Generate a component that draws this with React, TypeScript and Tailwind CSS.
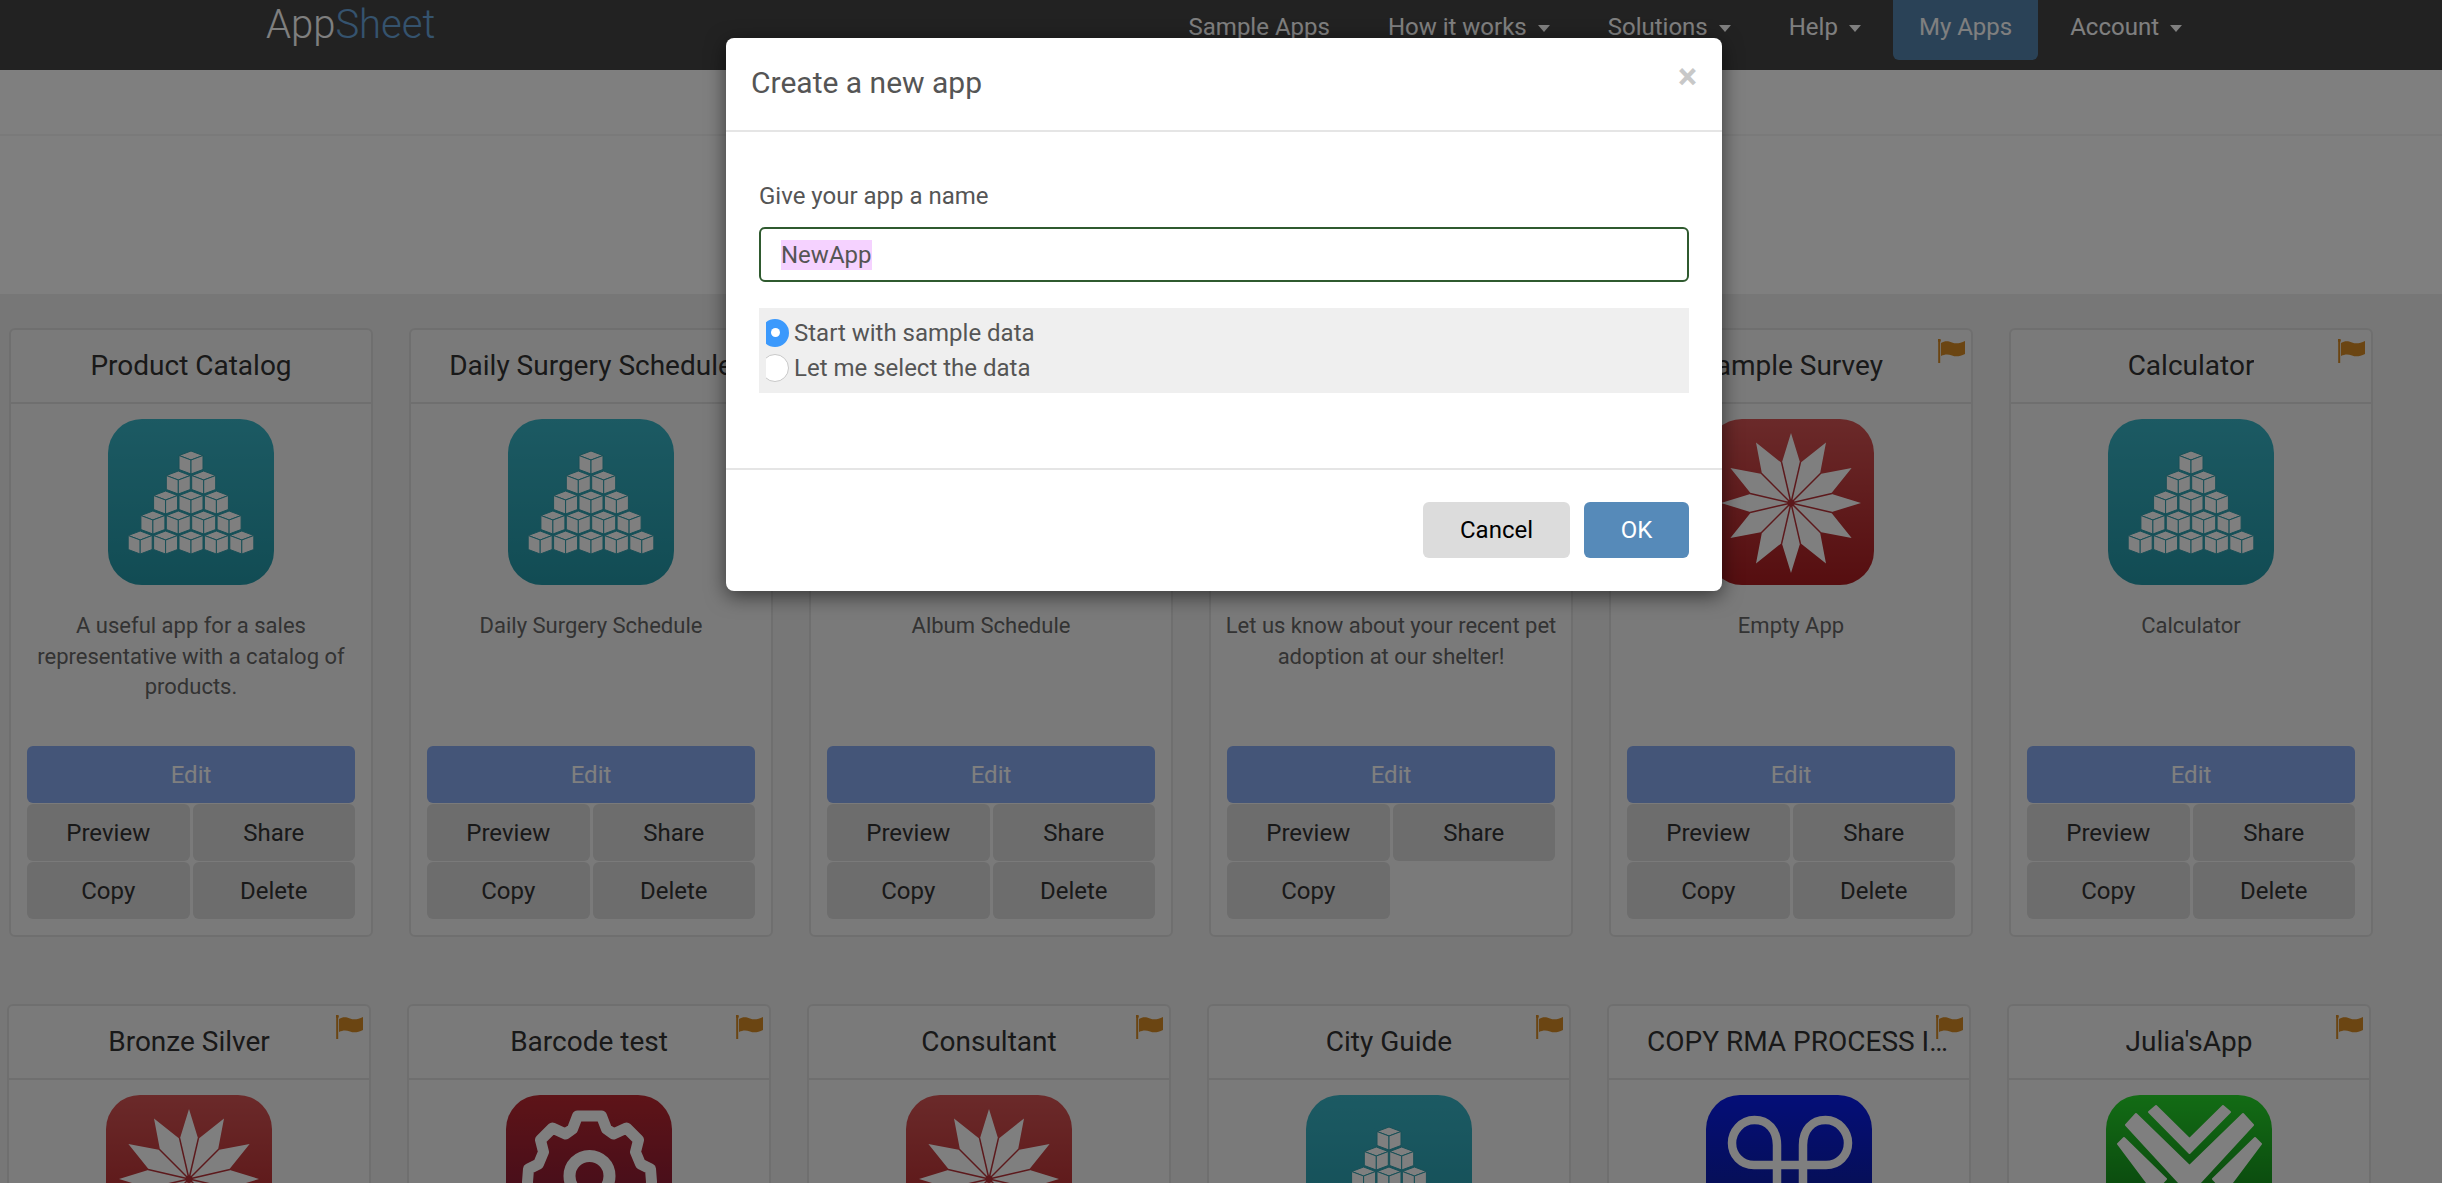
const font = { fontFamily: "Roboto, sans-serif" };

const CubeIcon = () => {
  const rows = [1, 2, 3, 4, 5];
  return (
    <>
      {rows.map((count, r) =>
        Array.from({ length: count }).map((_, i) => {
          const x = 83 + (i - (count - 1) / 2) * 25.4;
          const y = 32 + r * 20;
          return (
            <g key={r + "-" + i} fill="#ffffff" stroke="#2f9fae" strokeWidth="1" strokeLinejoin="round">
              <path d={`M${x} ${y}L${x + 12 } ${y + 4.5}L${x} ${y + 9}L${x - 12} ${y + 4.5}Z`} />
              <path d={`M${x - 12} ${y + 4.5}L${x} ${y + 9}V${y + 23}L${x - 12} ${y + 18.5}Z`} />
              <path d={`M${x + 12} ${y + 4.5}L${x} ${y + 9}V${y + 23}L${x + 12} ${y + 18.5}Z`} />
            </g>
          );
        })
      )}
    </>
  );
};

const polar = (deg: number, r: number) => {
  const a = (deg * Math.PI) / 180;
  return [83 + r * Math.sin(a), 84 - r * Math.cos(a)];
};

const StarIcon = () => {
  const shoulders = [13, 45, 77, 103, 135, 167, 193, 225, 257, 283, 315, 347];
  const outline: string[] = [];
  shoulders.forEach((s, i) => {
    outline.push(polar(i * 30, 70).join(" "));
    outline.push(polar(s, 41).join(" "));
  });
  return (
    <>
      <polygon points={outline.join(" ")} fill="#ffffff" />
      {shoulders.map((s) => {
        const [x, y] = polar(s, 42);
        return <line key={s} x1="83" y1="84" x2={x} y2={y} stroke="#b93238" strokeWidth="1.5" />;
      })}
      <circle cx="83" cy="84" r="3.5" fill="#b93238" />
    </>
  );
};

const GearIcon = () => {
  // left half of the outline, mirrored to the right and then to the bottom
  const half = [[12, 21], [17, 34], [24, 39], [37, 33], [49, 45], [46, 57], [51, 69], [61, 74], [62, 87]];
  const top = [...half.map(([d, y]) => [83.5 - d, y]).reverse(), ...half.map(([d, y]) => [83.5 + d, y])];
  const bottom = [...top].reverse().map(([x, y]) => [x, 174 - y]);
  const pts = [...top, ...bottom].map((p) => p.join(" ")).join(" ");
  return (
    <>
      <polygon points={pts} fill="none" stroke="#ffffff" strokeWidth="11" strokeLinejoin="round" />
      <circle cx="83.5" cy="81" r="20" fill="none" stroke="#ffffff" strokeWidth="12" />
    </>
  );
};

const LoopIcon = () => (
  <path
    d="M71 130V50C71 35 62 25 48.5 25C35 25 26 37 26 48C26 60 35 70 48 70H120C133 70 142 60 142 48C142 37 133 25 119.5 25C106 25 97 35 97 50V130"
    fill="none"
    stroke="#ffffff"
    strokeWidth="8.5"
  />
);

const ChevronIcon = () => (
  <g fill="#ffffff" stroke="#ffffff" strokeWidth="2" strokeLinejoin="round">
    <polygon points="50,11 83.5,44 117,11 124,17 83.5,58 43,17" />
    <polygon points="30,19 83.5,71 137,19 147,30 83.5,99 20,30" />
    <polygon points="18,43 60,84 48,97 12,49" />
    <polygon points="149,43 107,84 119,97 155,49" />
  </g>
);

const icons = {
  cube: { top: "#38b4c6", bottom: "#2498a8", art: <CubeIcon /> },
  star: { top: "#d65454", bottom: "#ac1c20", art: <StarIcon /> },
  gear: { top: "#bc2830", bottom: "#701438", art: <GearIcon /> },
  loop: { top: "#081cf0", bottom: "#10207c", art: <LoopIcon /> },
  chevron: { top: "#26d82a", bottom: "#0a6414", art: <ChevronIcon /> },
};

const AppIcon = ({ kind }: { kind: keyof typeof icons }) => {
  const icon = icons[kind];
  return (
    <svg width="166" height="166" viewBox="0 0 166 166" className="block">
      <defs>
        <linearGradient id={"g-" + kind} x1="0" y1="0" x2="0" y2="1">
          <stop offset="0" stopColor={icon.top} />
          <stop offset="1" stopColor={icon.bottom} />
        </linearGradient>
      </defs>
      <rect width="166" height="166" rx="34" fill={`url(#g-${kind})`} />
      {icon.art}
    </svg>
  );
};

const Flag = () => (
  <svg width="27" height="24" viewBox="0 0 27 24" className="absolute right-[6px] top-[9px]">
    <rect x="0.2" y="0" width="2" height="24" fill="#d68a24" />
    <circle cx="1.2" cy="1.4" r="1.6" fill="#d68a24" />
    <path d="M3 4C7 1.5 10 2 14 3.5C18 5 22 4.5 27 2V15C22 17.5 18 18 14 16.5C10 15 7 15 3 17Z" fill="#d68a24" />
  </svg>
);

const ActionButton = ({ label }: { label: string }) => (
  <button className="h-[57px] rounded-[6px] bg-[#dadada] text-[24px] text-[#333333]">{label}</button>
);

type CardProps = {
  title: string;
  description: string;
  kind: keyof typeof icons;
  flag?: boolean;
  noDelete?: boolean;
  titleClass?: string;
};

const Card = ({ title, description, kind, flag, noDelete, titleClass = "px-[18px]" }: CardProps) => (
  <div className="relative flex w-[364px] flex-none flex-col rounded-[6px] border-2 border-[#dfdfdf] bg-[#f5f5f5]">
    <div className={"flex h-[74px] flex-none items-center justify-center border-b-2 border-[#dfdfdf] " + titleClass}>
      <div className="truncate text-[28px] text-[#333333]">{title}</div>
    </div>
    {flag && <Flag />}
    <div className="flex flex-col items-center px-[16px] pt-[15px] pb-[16px]">
      <AppIcon kind={kind} />
      <p className="-mx-[4px] mt-[26px] h-[135px] text-center text-[22px] leading-[30.5px] text-[#666666]">{description}</p>
      <button className="h-[57px] w-full rounded-[6px] bg-[#88aaf0] text-[24px] text-white">Edit</button>
      <div className="mt-[1px] grid w-full grid-cols-2 gap-x-[3px] gap-y-[1px]">
        <ActionButton label="Preview" />
        <ActionButton label="Share" />
        <ActionButton label="Copy" />
        {!noDelete && <ActionButton label="Delete" />}
      </div>
    </div>
  </div>
);

const NavItem = ({ label, caret, active }: { label: string; caret?: boolean; active?: boolean }) => (
  <div className={"mx-[3px] flex h-[60px] items-center rounded-b-[6px] px-[26px] pb-[6px] text-[24px] text-white " + (active ? "bg-[#5484ae]" : "")}>
    {label}
    {caret && <span className="ml-[11px] mt-[3px] border-x-[6px] border-t-[7px] border-x-transparent border-t-white" />}
  </div>
);

const firstRow: CardProps[] = [
  { title: "Product Catalog", description: "A useful app for a sales representative with a catalog of products.", kind: "cube" },
  { title: "Daily Surgery Schedule", description: "Daily Surgery Schedule", kind: "cube" },
  { title: "Album Schedule", description: "Album Schedule", kind: "cube", flag: true },
  { title: "Pet Adoption", description: "Let us know about your recent pet adoption at our shelter!", kind: "cube", flag: true, noDelete: true },
  { title: "Sample Survey", description: "Empty App", kind: "star", flag: true },
  { title: "Calculator", description: "Calculator", kind: "cube", flag: true },
];

const secondRow: CardProps[] = [
  { title: "Bronze Silver", description: "", kind: "star", flag: true },
  { title: "Barcode test", description: "", kind: "gear", flag: true },
  { title: "Consultant", description: "", kind: "star", flag: true },
  { title: "City Guide", description: "", kind: "cube", flag: true },
  { title: "COPY RMA PROCESS INVENTORY", description: "", kind: "loop", flag: true, titleClass: "pl-[38px] pr-[15px]" },
  { title: "Julia'sApp", description: "", kind: "chevron", flag: true },
];

const RadioRow = ({ label, checked }: { label: string; checked?: boolean }) => (
  <div className="flex h-[35px] items-center">
    <span className="ml-[7px] flex h-[28px] w-[23px] flex-none items-center justify-end overflow-hidden">
      {checked ? (
        <span className="flex h-[28px] w-[28px] flex-none items-center justify-center rounded-full bg-[#3b99fc]">
          <span className="h-[9px] w-[9px] rounded-full bg-white" />
        </span>
      ) : (
        <span className="h-[28px] w-[28px] flex-none rounded-full border border-[#c8c8c8] bg-white" />
      )}
    </span>
    <span className="ml-[5px] text-[24px] text-[#555555]">{label}</span>
  </div>
);

export default function App() {
  return (
    <div className="relative h-[1183px] w-full overflow-hidden bg-[#eeeeee]" style={font}>
      <header className="flex h-[70px] items-start bg-[#444444] pr-[231px]">
        <div className="ml-[266px] text-[40px] leading-[50px] font-light text-white">
          App<span className="text-[#6aa6dc]">Sheet</span>
        </div>
        <nav className="ml-auto flex">
          <NavItem label="Sample Apps" />
          <NavItem label="How it works" caret />
          <NavItem label="Solutions" caret />
          <NavItem label="Help" caret />
          <NavItem label="My Apps" active />
          <NavItem label="Account" caret />
        </nav>
      </header>
      <div className="h-[66px] border-b-2 border-[#f4f4f4] bg-white" />
      <div className="h-[158px] bg-white" />
      <div className="flex gap-[36px] pt-[34px] pl-[9px]">
        {firstRow.map((card) => (
          <Card key={card.title} {...card} />
        ))}
      </div>
      <div className="flex gap-[36px] pt-[67px] pl-[7px]">
        {secondRow.map((card) => (
          <Card key={card.title} {...card} />
        ))}
      </div>

      <div className="absolute inset-0 bg-black/50" />

      <div className="absolute top-[38px] left-[726px] w-[996px] rounded-[8px] bg-white shadow-[0_5px_20px_rgba(0,0,0,0.55)]">
        <div className="relative h-[94px] border-b-2 border-[#e5e5e5] pt-[26px] pl-[25px] text-[30px] leading-[38px] text-[#555555]">
          Create a new app
          <span className="absolute top-[20px] right-[25px] text-[36px] leading-[38px] font-bold text-[#c8c8c8]">×</span>
        </div>
        <div className="h-[336px] px-[33px] pt-[49px]">
          <label className="block text-[24px] leading-[30px] text-[#555555]">Give your app a name</label>
          <div className="mt-[16px] flex h-[55px] items-center rounded-[6px] border-2 border-[#2f5a2f] px-[20px] text-[24px] text-[#555555]">
            <span className="bg-[#f5d2ff] leading-[30px]">NewApp</span>
          </div>
          <div className="mt-[26px] h-[85px] bg-[#efefef] pt-[7px]">
            <RadioRow label="Start with sample data" checked />
            <RadioRow label="Let me select the data" />
          </div>
        </div>
        <div className="flex h-[123px] justify-end gap-[14px] border-t-2 border-[#e5e5e5] px-[33px] pt-[32px]">
          <button className="h-[56px] w-[147px] rounded-[6px] bg-[#dcdcdc] text-[24px] text-black">Cancel</button>
          <button className="h-[56px] w-[105px] rounded-[6px] bg-[#568ab9] text-[24px] text-white">OK</button>
        </div>
      </div>
    </div>
  );
}
